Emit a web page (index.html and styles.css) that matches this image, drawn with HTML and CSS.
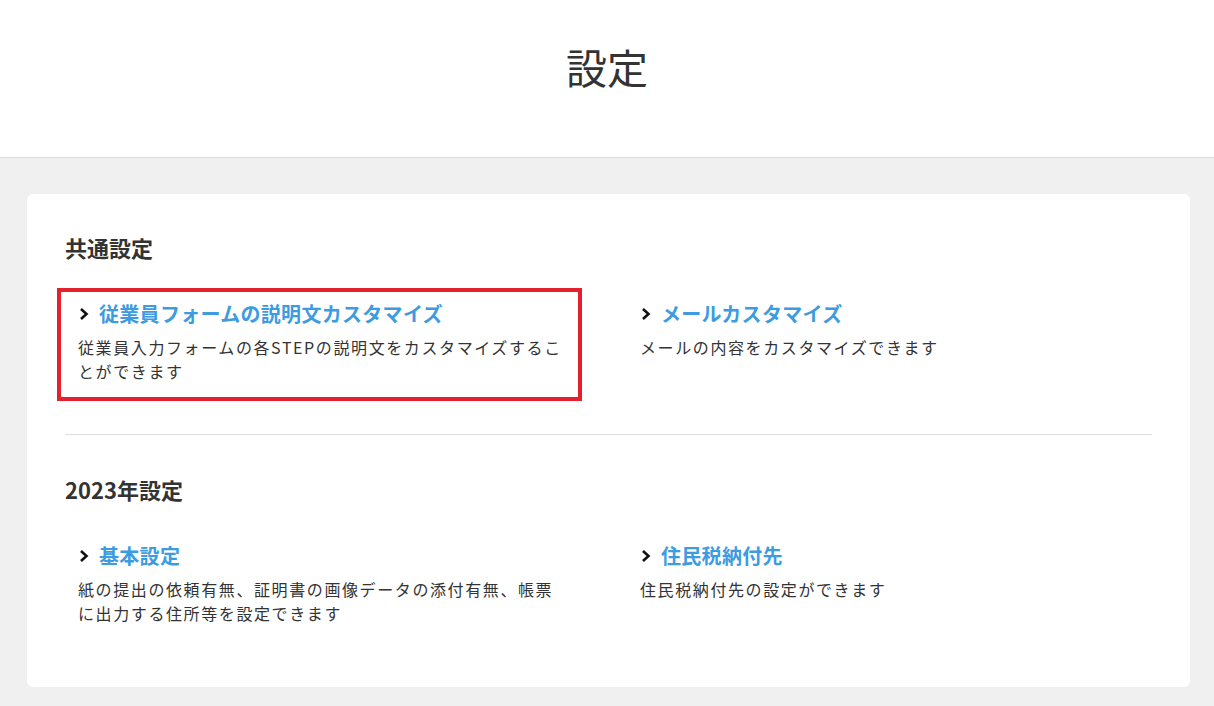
FILE: index.html
```html
<!DOCTYPE html>
<html lang="ja">
<head>
    <meta charset="UTF-8">
    <meta name="viewport" content="width=device-width, initial-scale=1.0">
    <title>設定</title>
    <link rel="stylesheet" href="styles.css">
</head>
<body>
    <header class="page-header">
        <h1>設定</h1>
    </header>

    <main class="main">
        <div class="card">
            <!-- 共通設定 -->
            <section class="section">
                <h2>共通設定</h2>
                <div class="items">
                    <div class="item highlight">
                        <a class="item-title" href="#">
                            <svg class="chevron" viewBox="0 0 10 14" width="10" height="14"><path d="M2 2 L7.5 7 L2 12" /></svg>
                            従業員フォームの説明文カスタマイズ
                        </a>
                        <p class="item-desc">従業員入力フォームの各STEPの説明文をカスタマイズすることができます</p>
                    </div>
                    <div class="item">
                        <a class="item-title" href="#">
                            <svg class="chevron" viewBox="0 0 10 14" width="10" height="14"><path d="M2 2 L7.5 7 L2 12" /></svg>
                            メールカスタマイズ
                        </a>
                        <p class="item-desc">メールの内容をカスタマイズできます</p>
                    </div>
                </div>
            </section>

            <hr class="divider">

            <!-- 年度設定 -->
            <section class="section">
                <h2>2023年設定</h2>
                <div class="items">
                    <div class="item">
                        <a class="item-title" href="#">
                            <svg class="chevron" viewBox="0 0 10 14" width="10" height="14"><path d="M2 2 L7.5 7 L2 12" /></svg>
                            基本設定
                        </a>
                        <p class="item-desc">紙の提出の依頼有無、証明書の画像データの添付有無、帳票に出力する住所等を設定できます</p>
                    </div>
                    <div class="item">
                        <a class="item-title" href="#">
                            <svg class="chevron" viewBox="0 0 10 14" width="10" height="14"><path d="M2 2 L7.5 7 L2 12" /></svg>
                            住民税納付先
                        </a>
                        <p class="item-desc">住民税納付先の設定ができます</p>
                    </div>
                </div>
            </section>
        </div>
    </main>
</body>
</html>
```

FILE: styles.css
```css
/* 全体 */
body {
    margin: 0;
    font-family: "Noto Sans CJK JP", "Noto Sans", sans-serif;
    color: #333;
    background-color: #f0f0f0;
}

/* ヘッダー */
.page-header {
    background-color: #fff;
    border-bottom: 1px solid #dcdcdc;
    height: 157px;
    display: flex;
    justify-content: center;
    align-items: center;
}

.page-header h1 {
    margin: 0 0 24px;
    font-size: 41px;
    font-weight: 400;
    line-height: 1.4;
}

.main {
    padding: 36px 24px 19px 27px;
}

.card {
    background-color: #fff;
    border-radius: 6px;
    padding: 38px 38px 44px;
}

.section h2 {
    margin: 0 0 25px;
    font-size: 22px;
    font-weight: 700;
    line-height: 1.4;
}

/* 項目 */
.items {
    display: grid;
    grid-template-columns: 525px 525px;
    column-gap: 37px;
    margin-left: -8px;
}

.item {
    border: 4px solid transparent;
    padding: 7px 10px 14px 17px;
}

.item.highlight {
    border-color: #e3202b;
}

.item-title {
    display: flex;
    align-items: center;
    gap: 10px;
    font-size: 20px;
    font-weight: 700;
    line-height: 30px;
    letter-spacing: 0.3px;
    color: #3d9be0;
    text-decoration: none;
    margin-bottom: 6px;
    padding-left: 1px;
}

.chevron {
    fill: none;
    stroke: #111;
    stroke-width: 2.6;
    flex-shrink: 0;
}

.item-desc {
    margin: 0;
    font-size: 16px;
    line-height: 24px;
    letter-spacing: 0.1em;
}

.divider {
    border: none;
    border-top: 1px solid #dedede;
    margin: 33px 0 39px;
}
```
